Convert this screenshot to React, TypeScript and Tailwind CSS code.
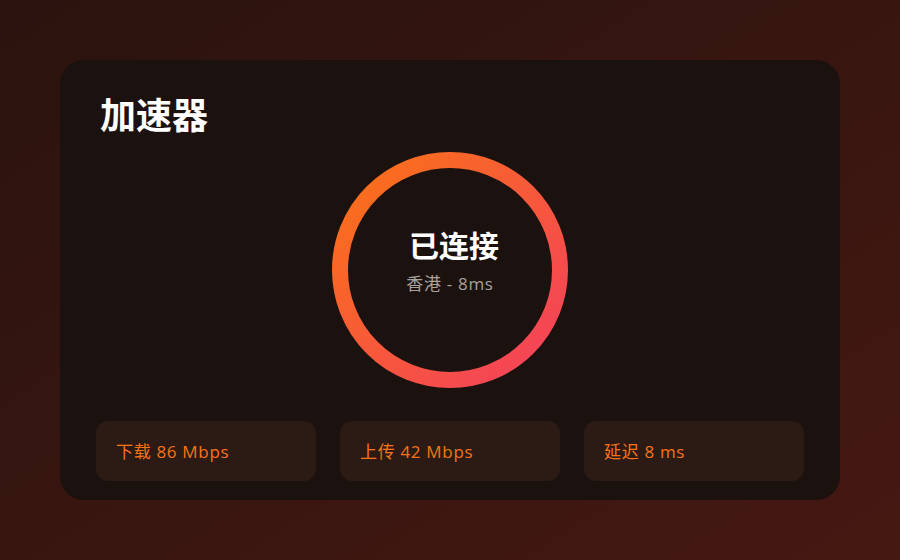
export default function App() {
  return (
    <div
      className="w-[900px] h-[560px] flex items-center justify-center bg-gradient-to-br from-[#2a130e] to-[#461812]"
      style={{ fontFamily: '"Open Sans", "Noto Sans CJK SC", sans-serif' }}
    >
      <div className="w-[780px] h-[440px] bg-[#1b110e] rounded-[24px] px-9 pt-9 flex flex-col">
        <h1 className="text-[36px] leading-10 font-bold text-white pl-1">加速器</h1>

        <div className="mt-4 flex justify-center">
          <div className="relative w-[236px] h-[236px]">
            <svg width="236" height="236" viewBox="0 0 236 236" className="absolute inset-0">
              <defs>
                <linearGradient id="ring" x1="0" y1="0" x2="1" y2="1">
                  <stop offset="0%" stopColor="#f97316" />
                  <stop offset="100%" stopColor="#f43f5e" />
                </linearGradient>
              </defs>
              <circle cx="118" cy="118" r="110" fill="none" stroke="url(#ring)" strokeWidth="16" />
            </svg>
            <div className="absolute inset-0 flex flex-col items-center justify-center">
              <div className="text-[30px] leading-9 font-bold text-white -mt-[16px] pl-2">已连接</div>
              <div className="mt-[8px] text-[17px] leading-6 tracking-[0.04em] text-[#a8a29e]">香港 - 8ms</div>
            </div>
          </div>
        </div>

        <div className="mt-[33px] grid grid-cols-3 gap-6">
          {['下载 86 Mbps', '上传 42 Mbps', '延迟 8 ms'].map((t) => (
            <div key={t} className="h-[60px] rounded-xl bg-[#2c1a14] flex items-center px-5 pt-px text-[17px] tracking-[0.04em] text-[#f97316]">
              {t}
            </div>
          ))}
        </div>
      </div>
    </div>
  )
}
